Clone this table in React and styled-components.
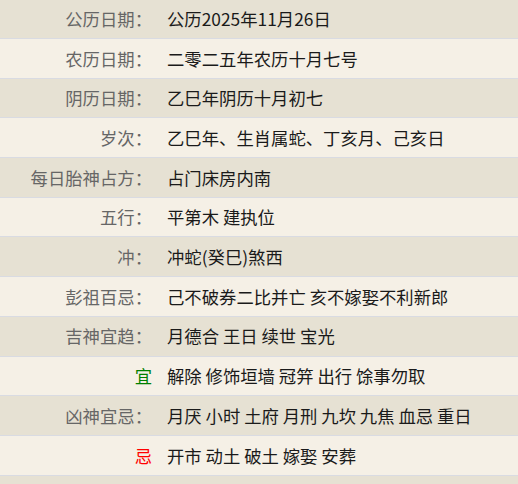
import React from 'react';
import styled, { createGlobalStyle } from 'styled-components';

const GlobalStyle = createGlobalStyle`
  html, body {
    margin: 0;
    padding: 0;
    overflow: hidden;
    background: #f5f0e6;
  }
  body {
    font-family: "Noto Sans CJK SC", "Noto Sans", sans-serif;
  }
`;

const Table = styled.div`
  display: flex;
  flex-direction: column;
  width: 518px;
  margin-top: -0.7px;
`;

const Row = styled.div`
  display: grid;
  grid-template-columns: 152px 1fr;
  column-gap: 15px;
  align-items: center;
  height: 38.7px;
  border-bottom: 1px solid #d9dbe2;
  background: ${(p) => (p.$dark ? '#e6e1d3' : '#f5f0e6')};
  font-size: 17.35px;
  line-height: 1;
`;

const Label = styled.div`
  text-align: right;
  color: ${(p) => p.$color || '#666666'};
  white-space: nowrap;
`;

const Value = styled.div`
  color: #1a1a1a;
  white-space: nowrap;
`;

const rows = [
  { label: '公历日期：', value: '公历2025年11月26日' },
  { label: '农历日期：', value: '二零二五年农历十月七号' },
  { label: '阴历日期：', value: '乙巳年阴历十月初七' },
  { label: '岁次：', value: '乙巳年、生肖属蛇、丁亥月、己亥日' },
  { label: '每日胎神占方：', value: '占门床房内南' },
  { label: '五行：', value: '平第木 建执位' },
  { label: '冲：', value: '冲蛇(癸巳)煞西' },
  { label: '彭祖百忌：', value: '己不破券二比并亡 亥不嫁娶不利新郎' },
  { label: '吉神宜趋：', value: '月德合 王日 续世 宝光' },
  { label: '宜', value: '解除 修饰垣墙 冠笄 出行 馀事勿取', color: '#008000' },
  { label: '凶神宜忌：', value: '月厌 小时 土府 月刑 九坎 九焦 血忌 重日' },
  { label: '忌', value: '开市 动土 破土 嫁娶 安葬', color: '#ff0000' },
  { label: '', value: '' },
];

export default function App() {
  return (
    <>
      <GlobalStyle />
      <Table>
        {rows.map((r, i) => (
          <Row key={i} $dark={i % 2 === 0}>
            <Label $color={r.color}>{r.label}</Label>
            <Value>{r.value}</Value>
          </Row>
        ))}
      </Table>
    </>
  );
}
